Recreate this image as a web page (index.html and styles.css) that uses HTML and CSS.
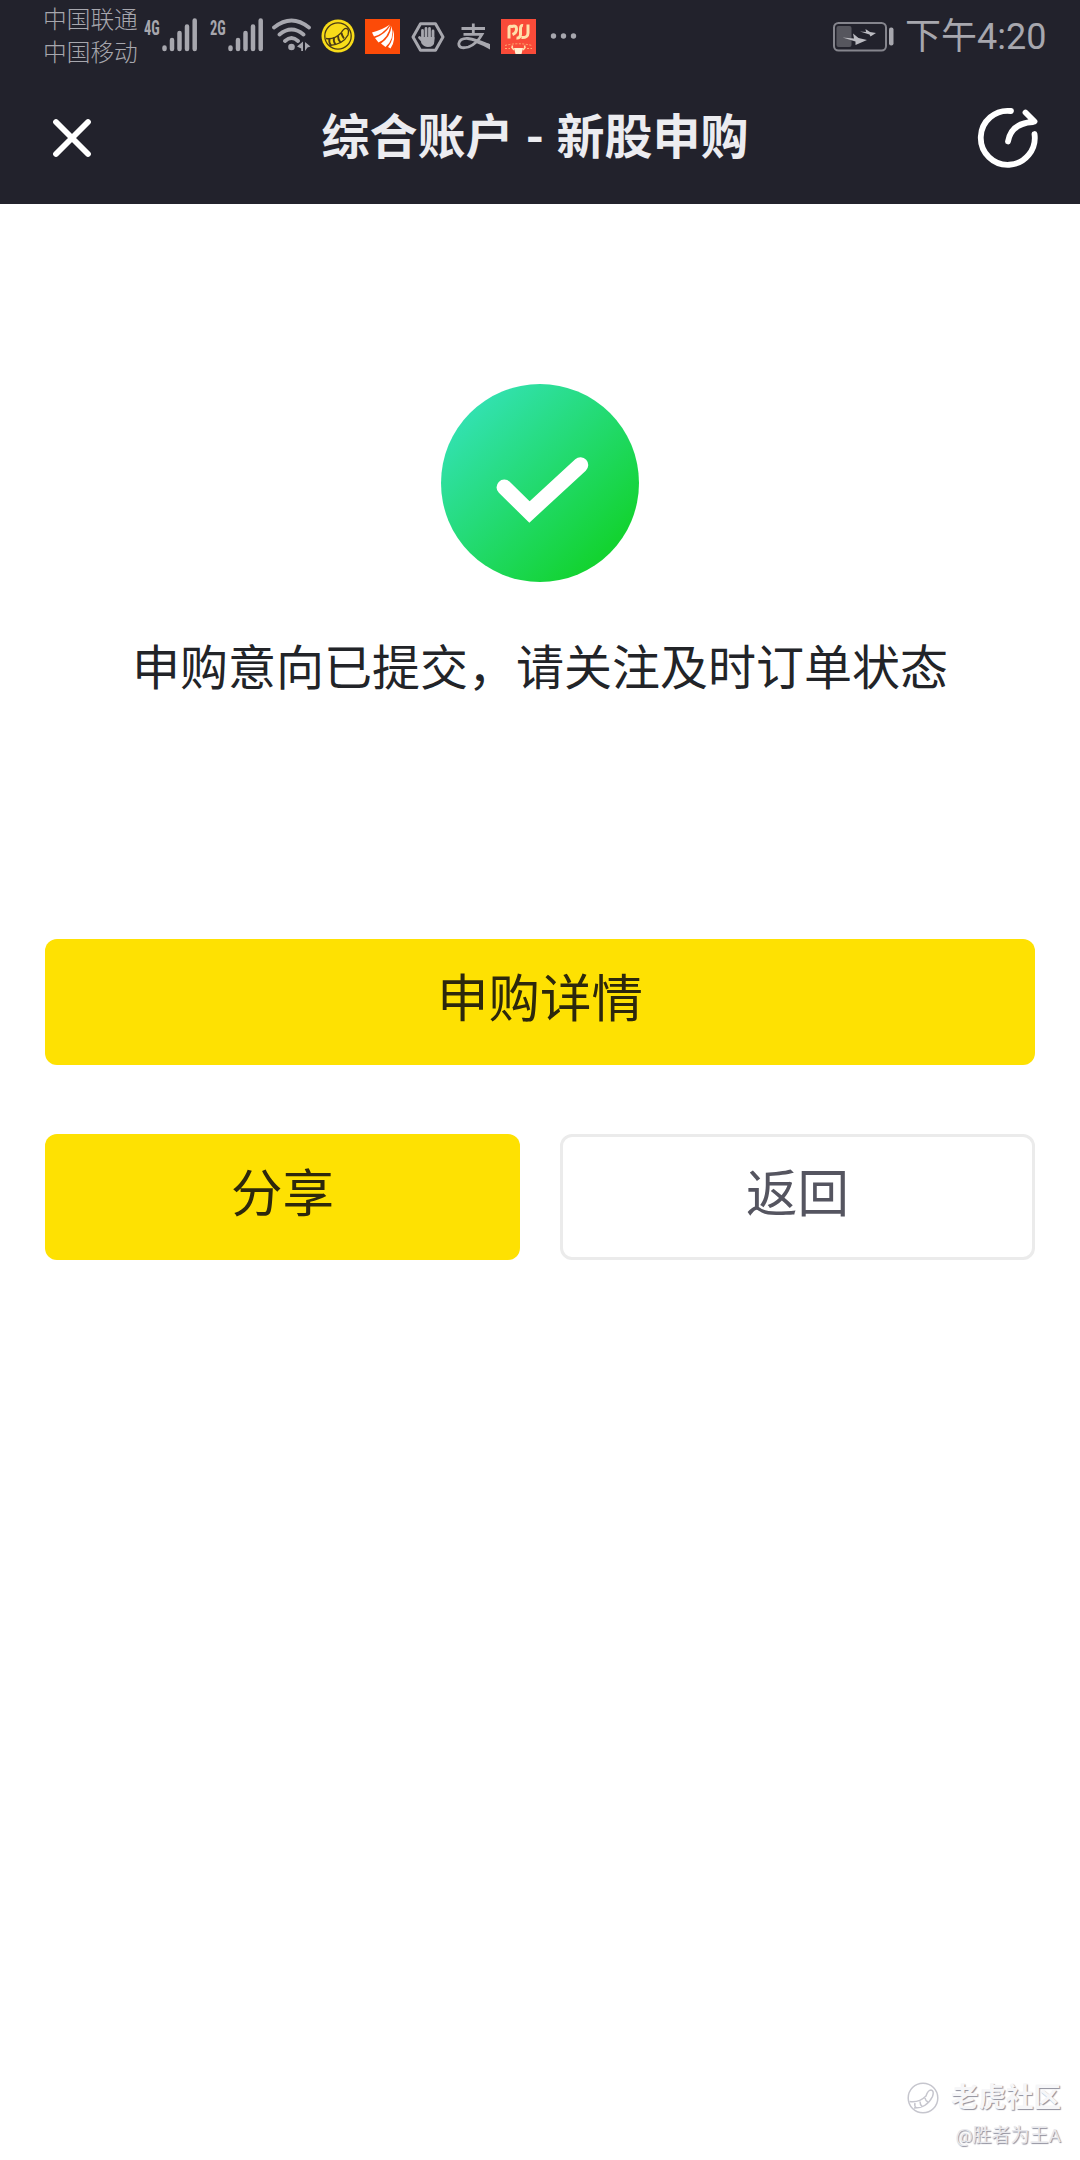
FILE: index.html
```html
<!DOCTYPE html>
<html lang="zh-CN">
<head>
<meta charset="utf-8">
<title>综合账户 - 新股申购</title>
<link rel="stylesheet" href="styles.css">
</head>
<body>
<div class="screen">
  <header class="top">
    <div class="status">
      <div class="carriers"><span>中国联通</span><span>中国移动</span></div>
      <div class="signal">
        <span class="net">4G</span>
        <svg class="bars" width="36" height="34" viewBox="0 0 36 34"><path d="M2.5 29.5v1.5M10 22v9M17.5 15v16M25 8.500v22.500M32.700 2.500v28.500"/></svg>
      </div>
      <div class="signal second">
        <span class="net">2G</span>
        <svg class="bars" width="36" height="34" viewBox="0 0 36 34"><path d="M2.500 29.500v1.500M10 22v9M17.500 15v16M25 8.500v22.500M32.700 2.500v28.500"/></svg>
      </div>
      <svg class="wifi" width="40" height="34" viewBox="0 0 40 34">
        <path class="arc" d="M2 9.500Q19.500-4.500 37 9.500M7.500 16.500Q19.500 6.500 31.500 16.500M13 23Q19.500 17 26 23"/>
        <circle cx="19.500" cy="29" r="3.300"/>
        <path d="M31 23.500v9.500h-1.800v-2.500l-4.200-2zM33 33v-9l5.500 4.500-3 1z"/>
      </svg>
      <svg class="tiger" width="34" height="34" viewBox="0 0 34 34">
        <circle cx="17" cy="17" r="16.500" fill="#f8dc19"/>
        <g fill="none" stroke="#4b3b16" stroke-width="1.300">
          <circle cx="17" cy="17" r="13.200"/>
          <path d="M5 19.500Q13 21 20 14q3-5 5.500-4.500 3 .5 1.500 6.500Q22 25.500 8.500 26.500"/>
          <path stroke-width="1.900" d="M8.500 19.500q-1 4 1.500 7M13 18.500q-1 4 1.500 7M17 17q0 3.500 2.500 6.500M20.500 14q.5 3 2.500 5.500"/>
        </g>
      </svg>
      <svg class="orange" width="35" height="35" viewBox="0 0 35 35">
        <rect width="35" height="35" fill="#fc4b08"/>
        <g fill="#fff"><path d="M7 13.500Q17 11 25 5.500 17 16 9 17.500z"/><path d="M10 19Q20 15.500 25.500 6.500 23 19.500 13.500 23.500z"/><path d="M16 24.500Q25.500 18 26.500 7 30 19.500 20.500 28z"/><path d="M23 28Q29 21 27.800 10 31.500 21 25.500 29.500z"/></g>
      </svg>
      <svg class="hex" width="34" height="30" viewBox="0 0 34 30">
        <path d="M9.500 1.800h15L32 15l-7.500 13.200h-15L2 15z" fill="none" stroke="#a7a7ae" stroke-width="3" stroke-linejoin="round"/>
        <path d="M11.500 17V8.500M15 16V6.500M18.500 16V6.500M22 17V9M8.500 15.500l4 4.500" fill="none" stroke="#a7a7ae" stroke-width="2.800" stroke-linecap="round"/>
        <path d="M10.200 15h13.200v4q0 6-6.500 6-4 0-6.700-4z" fill="#a7a7ae"/>
      </svg>
      <svg class="pay" width="34" height="28" viewBox="0 0 34 28">
        <path d="M4.500 5.500H28M16.300.500V11M6.500 11.300H25Q20 20.500 11.500 24 1.500 26.500 1.800 20.500 3 15 11 15.500 18 16.500 32.500 22.500" fill="none" stroke="#a7a7ae" stroke-width="2.800"/>
        <path d="M18 17.200l15 3.800v5.500Q25 22 18 19.500z" fill="#a7a7ae"/>
      </svg>
      <svg class="red" width="35" height="35" viewBox="0 0 35 35">
        <rect width="35" height="35" fill="#f94b39"/>
        <path d="M8 19.500V9q0-2.500 3-1.500 4.500-1.500 4.500 2.500 0 4-4 5.500M15.500 19q3.500.5 4-3.500V10q0-4 2.500-3.500M20.500 18.500q6.500.5 6.500-4.500V5.500" fill="none" stroke="#ffe0aa" stroke-width="3"/>
        <path d="M13 29h9l-1.500 6h-6z" fill="#fff0d2"/>
        <path d="M13 31l-2-2.500.5-2M22 31l2-2.500-.5-2" fill="none" stroke="#ffe0aa" stroke-width="1.500"/>
        <path d="M4 26.500q13-3.500 27 0M4 29.500h5M26 29.500h5" fill="none" stroke="#ffad72" stroke-dasharray="2 1.500"/>
      </svg>
      <svg class="more" width="27" height="8" viewBox="0 0 27 8"><circle cx="3.500" cy="4" r="2.700"/><circle cx="13.500" cy="4" r="2.700"/><circle cx="23.500" cy="4" r="2.700"/></svg>
      <svg class="battery" width="61" height="30" viewBox="0 0 61 30">
        <rect x="1" y="1" width="52" height="27.500" rx="4.500" fill="none" stroke="#85858d" stroke-width="2"/>
        <rect x="3.500" y="4" width="15" height="21" rx="2" fill="#56565e"/>
        <rect x="56" y="5.500" width="4.500" height="18" rx="2" fill="#a7a7ae"/>
        <path d="M9.500 15.500l11.500 1-1-5 5.500 4.500 8.500 2-11.500 5v-3.500zM27 9.500l6 .5-.5-3 4.500 3 6 1-5.500 3.500-1-2z" fill="#bbbbc1"/>
      </svg>
      <span class="time">下午4:20</span>
    </div>
    <div class="nav">
      <svg class="close" width="42" height="42" viewBox="0 0 42 42"><path d="M5 5l32 32M37 5L5 37"/></svg>
      <h1 class="title">综合账户 - 新股申购</h1>
      <svg class="share" width="62" height="62" viewBox="0 0 62 62"><path d="M34 4A27 27 0 1 0 57.500 27M31 34.500Q34.500 16 56 15M48.500 5.500L57.500 14.500"/></svg>
    </div>
  </header>
  <main class="content">
    <svg class="success" width="198" height="198" viewBox="0 0 198 198">
      <defs><linearGradient id="green" x1=".15" y1=".15" x2=".82" y2=".85"><stop offset="0" stop-color="#32e1ae"/><stop offset="1" stop-color="#13d331"/></linearGradient></defs>
      <circle cx="99" cy="99" r="99" fill="url(#green)"/>
      <path d="M63.300 103.300L88.500 128 139.500 81" fill="none" stroke="#fff" stroke-width="15.500" stroke-linecap="round"/>
    </svg>
    <p class="message">申购意向已提交，请关注及时订单状态</p>
    <div class="actions">
      <button class="btn wide">申购详情</button>
      <button class="btn">分享</button>
      <button class="btn outline">返回</button>
    </div>
  </main>
  <footer class="mark">
    <div class="brand">
      <svg width="34" height="34" viewBox="0 0 34 34"><circle cx="17" cy="17" r="14.800"/><path d="M3.500 20.500Q13 22 20 15q2-6 5-6 3.500.5 1.500 6.500Q21 27 8 27M9 22q-1 3 1.500 5M14 20.500q0 3 2 5M19 17q.5 3 3 4"/></svg>
      <span class="community">老虎社区</span>
    </div>
    <span class="author">@胜者为王A</span>
  </footer>
</div>
</body>
</html>
```
FILE: styles.css
```css
* { box-sizing: border-box; }
body { margin: 0; background: #fff; font-family: Roboto, "Noto Sans CJK SC", sans-serif; }
svg { display: block; flex: none; }
.screen { width: 1080px; height: 2160px; display: flex; flex-direction: column; }
.top { height: 204px; background: #22222c; }
.status { height: 72px; display: flex; align-items: flex-start; padding-left: 43px; color: #a7a7ae; white-space: nowrap; }
.carriers { width: 101px; display: flex; flex-direction: column; padding-top: 4px; font-size: 23.700px; line-height: 33px; font-weight: 300; }
.signal { width: 66px; display: flex; padding-top: 18px; }
.signal.second { width: 62px; }
.net { width: 18px; font: 700 20px/20px "Roboto Condensed", Roboto, sans-serif; transform: scaleX(.72); transform-origin: 0 0; }
.bars { fill: none; stroke: #a7a7ae; stroke-width: 4.500; stroke-linecap: round; }
.wifi { margin-top: 18px; fill: #a7a7ae; }
.wifi .arc { fill: none; stroke: #a7a7ae; stroke-width: 3.800; stroke-linecap: round; }
.tiger { margin: 19px 0 0 9px; }
.orange { margin: 19px 0 0 10px; }
.hex { margin: 22px 0 0 11px; }
.pay { margin: 23px 0 0 12px; }
.red { margin: 19px 0 0 10px; }
.more { margin: 32px 0 0 14px; fill: #a7a7ae; }
.battery { margin: 22px 0 0 256px; }
.time { margin: 11px 0 0 11px; font-size: 36px; line-height: 52px; }
.nav { height: 132px; display: flex; align-items: center; justify-content: space-between; padding: 0 41px 0 51px; }
.close, .share { fill: none; stroke: #fff; stroke-width: 5.800; stroke-linecap: round; stroke-linejoin: round; }
.title { margin: 0; font-size: 48px; line-height: 72px; font-weight: 700; color: #ececf0; }
.content { flex: 1; display: flex; flex-direction: column; align-items: center; padding: 180px 45px 0; }
.message { margin: 51px 0 0; font-size: 48px; line-height: 72px; color: #222428; }
.actions { width: 100%; display: grid; grid-template-columns: 1fr 1fr; gap: 69px 40px; margin-top: 234px; }
.btn { height: 126px; padding: 0 0 4px; border: 0; border-radius: 12px; background: #fee102; color: #2d280c; font: 400 51.500px/76px Roboto, "Noto Sans CJK SC", sans-serif; }
.btn.wide { grid-column: 1 / 3; }
.btn.outline { background: #fff; border: 3px solid #ebebeb; color: #555560; }
.mark { display: flex; flex-direction: column; align-items: flex-end; padding-right: 19px; height: 82px; }
.brand { display: flex; align-items: center; gap: 11px; height: 40px; }
.brand svg { fill: none; stroke: #c6c6ce; stroke-width: 1.500; }
.community { font-size: 27.500px; line-height: 40px; font-weight: 700; color: #f6f6f8; text-shadow: 1px 1px 1px #8e8e9c; }
.author { font-size: 19px; line-height: 28px; margin-top: 4px; color: #e8e8ec; text-shadow: 1px 1px 1px #8e8e9c; }
```
